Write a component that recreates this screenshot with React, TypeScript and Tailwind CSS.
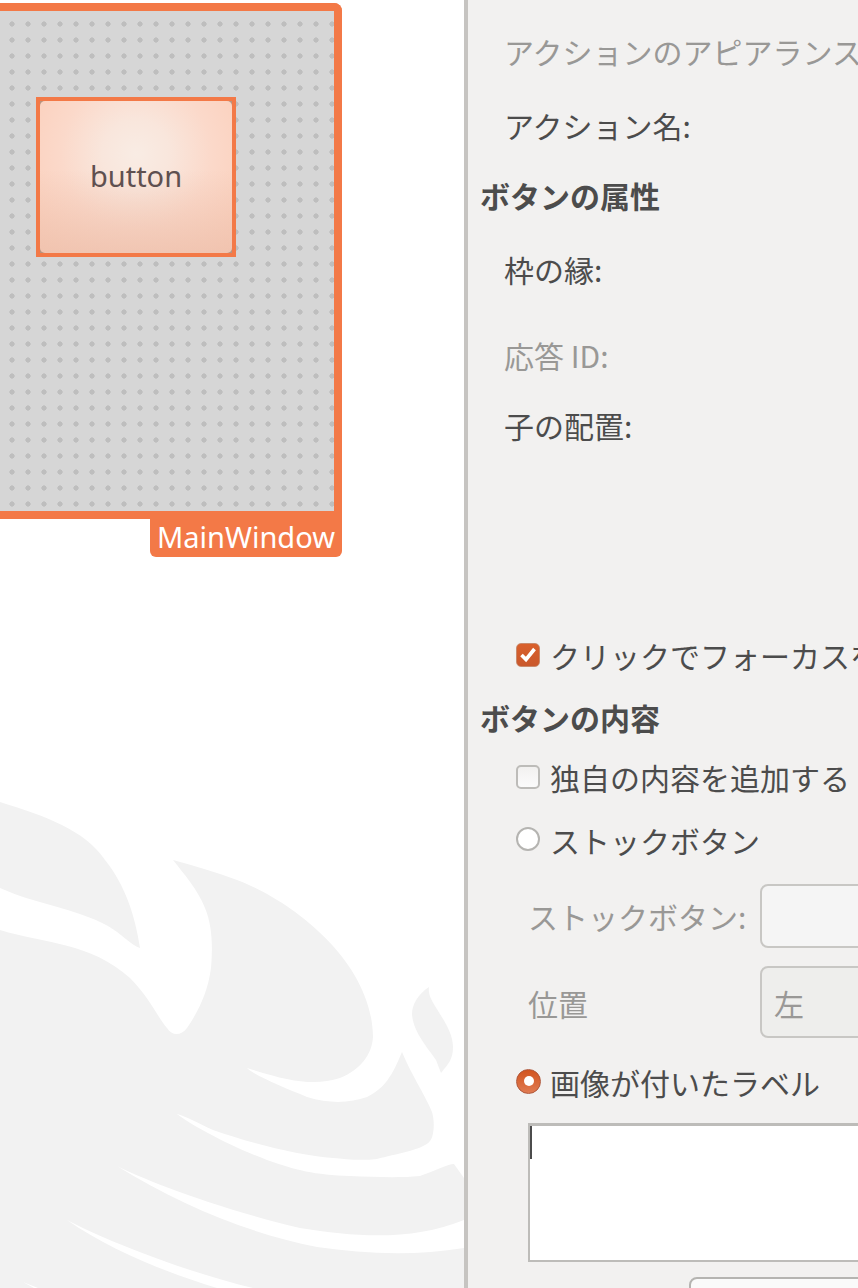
const latin = "font-['Noto_Sans','Noto_Sans_CJK_JP',sans-serif]"

function Watermark() {
  return (
    <svg className="absolute inset-0" width="464" height="1288" viewBox="0 0 464 1288">
      <g fill="#f2f2f2">
        <path d="M0 802 C45 816 85 830 105 860 C125 885 135 915 140 948 C132 946 122 934 108 926 C75 908 35 904 0 888 Z" />
        <path d="M0 930 C45 944 90 942 130 978 C150 998 158 1018 167 1028 C172 1036 181 1036 187 1028 C198 1012 208 992 211 968 C213 945 212 925 205 908 C198 890 184 874 173 860 C195 866 215 872 237 880 C290 900 372 960 373 1037 C372 1055 360 1070 340 1078 C315 1086 290 1082 247 1068 C255 1076 285 1088 307 1097 C330 1104 350 1103 367 1097 C385 1088 392 1076 402 1052 C410 1072 425 1095 432 1112 C435 1122 434 1136 430 1141 C423 1150 395 1154 377 1159 C360 1161 345 1159 333 1158 C300 1156 250 1143 213 1130 C200 1124 185 1116 177 1114 C190 1124 225 1144 267 1160 C295 1170 315 1175 350 1176 C375 1177 400 1178 420 1176 C432 1172 448 1164 454 1164 L464 1178 L464 1288 L0 1288 Z" />
      </g>
      <path fill="#f2f2f2" d="M429 987 C418 994 412 1005 412 1014 C413 1032 428 1048 436 1060 L441 1073 C448 1064 453 1060 453 1047 C453 1032 442 1018 435 1006 C431 999 428 994 429 987 Z" />
      <g fill="#ffffff">
        <path d="M117 1166 C140 1178 215 1208 300 1228 C360 1238 415 1240 464 1220 L464 1248 C415 1256 365 1254 317 1247 C250 1234 180 1205 117 1166 Z" />
        <path d="M67 1220 C100 1238 185 1272 253 1288 L217 1288 C165 1272 110 1250 67 1220 Z" />
        <path d="M23 1282 L38 1288 L34 1288 Z" />
      </g>
    </svg>
  )
}

function MainWindow() {
  return (
    <div className="relative w-[342px]">
      <div className="h-[516px] rounded-tr-[8px] border-t-8 border-r-8 border-b-8 border-[#f37947] bg-[#d6d6d6] bg-[radial-gradient(circle,#bebebe_2.4px,transparent_2.8px)] bg-[length:16px_16px] bg-[position:4px_5px] pt-[86px] pl-[36px]">
        <div className="h-[160px] w-[200px] border-4 border-[#f37947] bg-[#b8937f]">
          <div className={`flex h-full items-center justify-center rounded-[5px] bg-[linear-gradient(to_bottom,transparent_45%,#ecbfabb0_100%),radial-gradient(ellipse_at_50%_35%,#f9ece4_0%,#f9e6dc_25%,#fbd9ca_55%,#fbcdb8_100%)] pb-[2px] text-[29px] text-[#5f5050] ${latin}`}>
            button
          </div>
        </div>
      </div>
      <div className={`ml-auto flex h-[38px] w-[192px] items-center justify-center rounded-b-[6px] bg-[#f37947] pb-[2px] text-[29px] text-white ${latin}`}>
        MainWindow
      </div>
    </div>
  )
}

function CheckBox({ checked }: { checked?: boolean }) {
  if (checked) {
    return (
      <span className="flex size-[24px] shrink-0 items-center justify-center rounded-[5px] border border-[#c98a6c] bg-[linear-gradient(to_bottom,#d9602c,#c9582c)]">
        <svg width="18" height="18" viewBox="0 0 18 18" fill="none" stroke="#ffffff" strokeWidth="3.6">
          <path d="M2.5 9 L7 13.5 L15.5 3" />
        </svg>
      </span>
    )
  }
  return <span className="size-[24px] shrink-0 rounded-[5px] border-2 border-[#bdbcb9] bg-[linear-gradient(to_bottom,#f2f1f0,#fbfbfb)]" />
}

function Radio({ checked }: { checked?: boolean }) {
  if (checked) {
    return (
      <span className="-mt-[2px] flex size-[25px] shrink-0 items-center justify-center rounded-full border border-[#b0573a] bg-[linear-gradient(to_bottom,#d2541f,#e07b52)]">
        <span className="size-[10px] rounded-full bg-white" />
      </span>
    )
  }
  return <span className="-mt-[2px] size-[24px] shrink-0 rounded-full border-2 border-[#b5b4b1] bg-white" />
}

function Label({ children, className }: { children: React.ReactNode; className: string }) {
  return <div className={`flex h-[40px] items-center whitespace-nowrap ${className}`}>{children}</div>
}

function PropertiesPane() {
  return (
    <div className="min-w-0 flex-1 overflow-hidden border-l-4 border-[#c6c4c1] bg-[#f2f1f0] text-[30px] text-[#4c4c4c]">
      <Label className="mt-[31px] ml-[36px] text-[#999896]">アクションのアピアランス</Label>
      <Label className="mt-[34px] ml-[36px]">アクション名:</Label>
      <Label className="mt-[30px] ml-[12px] font-bold">ボタンの属性</Label>
      <Label className="mt-[34px] ml-[36px]">枠の縁:</Label>
      <Label className="mt-[46px] ml-[36px] text-[#999896]">応答 ID:</Label>
      <Label className="mt-[30px] ml-[36px]">子の配置:</Label>
      <Label className="mt-[190px] ml-[48px] gap-[10px]">
        <CheckBox checked />
        クリックでフォーカスを
      </Label>
      <Label className="mt-[22px] ml-[12px] font-bold">ボタンの内容</Label>
      <Label className="mt-[20px] ml-[48px] gap-[10px]">
        <CheckBox />
        独自の内容を追加する
      </Label>
      <Label className="mt-[23px] ml-[48px] gap-[10px]">
        <Radio />
        ストックボタン
      </Label>
      <div className="mt-[24px] ml-[60px] flex h-[64px] items-center whitespace-nowrap text-[#999896]">
        <span className="w-[232px] shrink-0">ストックボタン:</span>
        <div className="h-full w-[200px] shrink-0 rounded-[8px] border-2 border-[#c8c7c4] bg-[#f5f5f5]" />
      </div>
      <div className="mt-[18px] ml-[60px] flex h-[72px] items-center whitespace-nowrap text-[#999896]">
        <span className="w-[232px] shrink-0 pt-[3px]">位置</span>
        <div className="flex h-full w-[200px] shrink-0 items-center rounded-[8px] border-2 border-[#c8c7c4] bg-[#eeeeec] pt-[3px] pl-[12px]">左</div>
      </div>
      <Label className="mt-[24px] ml-[48px] gap-[9px]">
        <Radio checked />
        画像が付いたラベル
      </Label>
      <div className="mt-[21px] ml-[60px] h-[139px] w-[340px] border-t-[3px] border-b-[2px] border-l-[2px] border-[#bdbcb9] bg-white">
        <div className="h-[33px] w-[2px] bg-[#4c4c4c]" />
      </div>
      <div className="mt-[15px] ml-[221px] h-[40px] w-[200px] rounded-t-[8px] border-2 border-[#b5b4b1] bg-[#fafafa]" />
    </div>
  )
}

export default function App() {
  return (
    <div className="flex h-[1288px] w-[858px] overflow-hidden bg-white font-['Noto_Sans_CJK_JP',sans-serif]">
      <div className="relative w-[464px] shrink-0 pt-[3px]">
        <Watermark />
        <MainWindow />
      </div>
      <PropertiesPane />
    </div>
  )
}
